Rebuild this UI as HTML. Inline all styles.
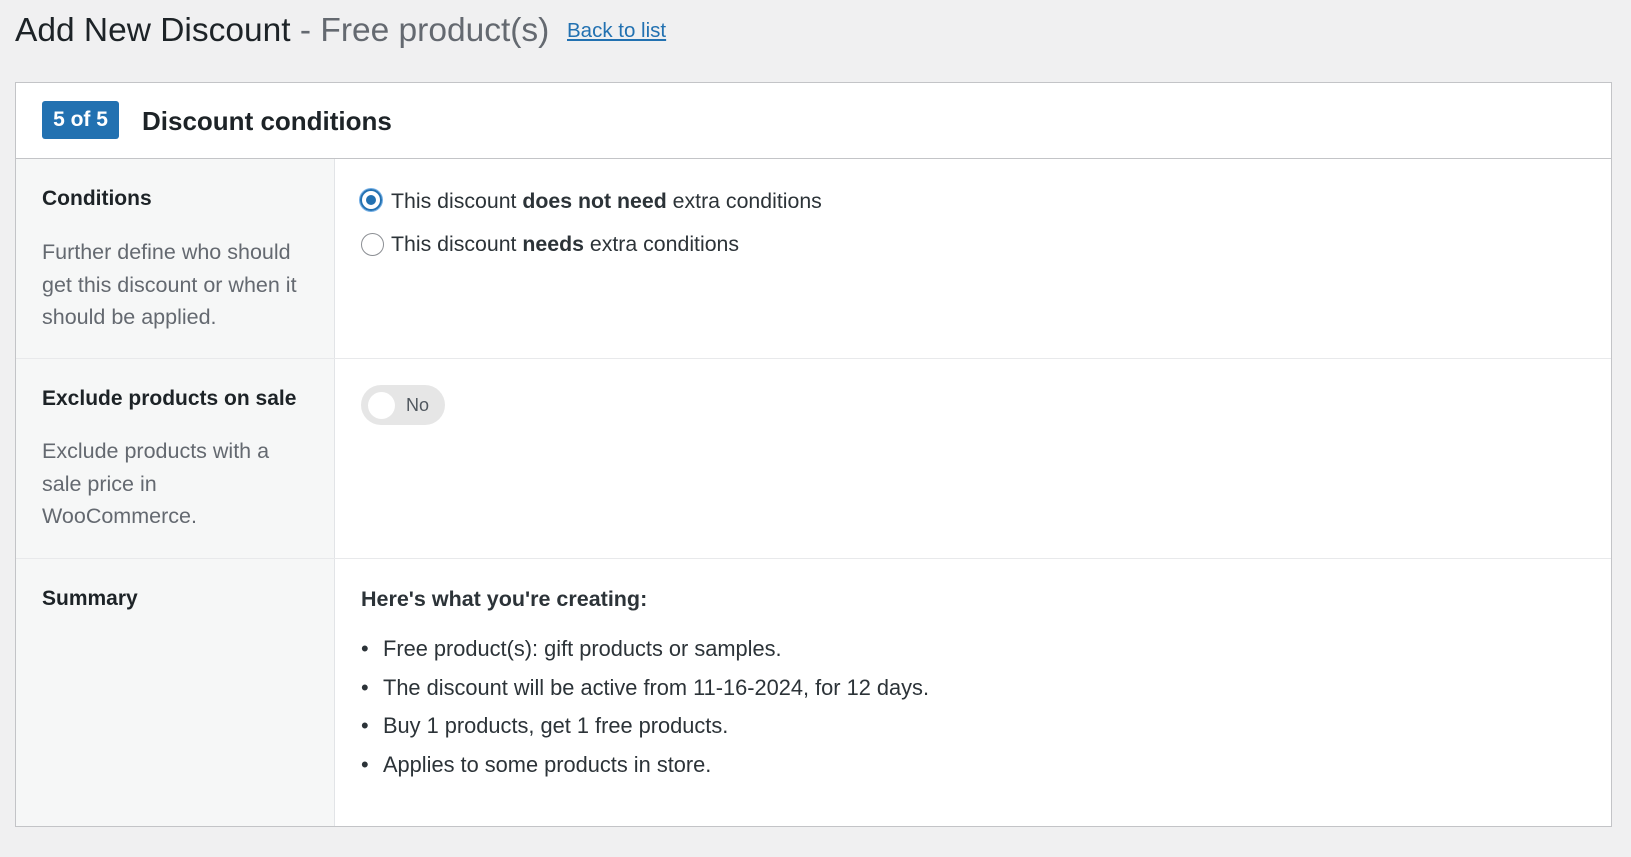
<!DOCTYPE html>
<html><head><meta charset="utf-8"><style>
body{margin:0;width:1631px;height:857px;background:#f0f0f1;font-family:"Liberation Sans",sans-serif;color:#3c434a;position:relative;overflow:hidden}
.a{position:absolute;white-space:nowrap}
.panel{position:absolute;left:15px;top:82px;width:1597px;height:745px;background:#fff;border:1px solid #c3c4c7;box-sizing:border-box}
.lc{position:absolute;left:16px;width:318px;background:#f6f7f7;border-right:1px solid #e2e4e7}
.hr{position:absolute;left:16px;width:1595px;height:1px;background:#e8e9eb}
.lbl{font-size:21px;font-weight:bold;color:#1d2327;line-height:30px}
.desc{font-size:21.5px;color:#646970;line-height:32.5px}
.t{font-size:21.3px;line-height:30px;color:#2c3338}
</style></head><body>
<div class="a" style="left:15px;top:11px;font-size:33.5px;line-height:40px;color:#1d2327">Add New Discount <span style="color:#646970">- Free product(s)</span></div>
<div class="a" style="left:567px;top:18px;font-size:20.5px;line-height:26px;color:#2271b1;text-decoration:underline">Back to list</div>
<div class="panel"></div>
<div class="a" style="left:16px;top:158px;width:1595px;height:1px;background:#c3c4c7"></div>
<div class="lc" style="top:159px;height:667px"></div>
<div class="hr" style="top:358px"></div>
<div class="hr" style="top:558px"></div>
<div class="a" style="left:42px;top:101px;width:77px;height:38px;background:#2271b1;border-radius:3px;color:#fff;font-size:21px;font-weight:bold;line-height:38px;text-align:center">5 of 5</div>
<div class="a" style="left:142px;top:105px;font-size:26px;font-weight:bold;line-height:32px;color:#1d2327">Discount conditions</div>

<div class="a lbl" style="left:42px;top:184px">Conditions</div>
<div class="a desc" style="left:42px;top:236px">Further define who should<br>get this discount or when it<br>should be applied.</div>

<div class="a" style="left:360px;top:189px;width:22px;height:22px;border:2px solid #2271b1;border-radius:50%;box-sizing:border-box;box-shadow:0 0 0 1px #72aee6"></div>
<div class="a" style="left:366px;top:195px;width:10px;height:10px;background:#2271b1;border-radius:50%"></div>
<div class="a t" style="left:391px;top:186px">This discount <b>does not need</b> extra conditions</div>
<div class="a" style="left:361px;top:233px;width:23px;height:23px;border:1px solid #8c8f94;border-radius:50%;box-sizing:border-box;background:#fff"></div>
<div class="a t" style="left:391px;top:229px">This discount <b>needs</b> extra conditions</div>

<div class="a lbl" style="left:42px;top:384px">Exclude products on sale</div>
<div class="a desc" style="left:42px;top:435px">Exclude products with a<br>sale price in<br>WooCommerce.</div>
<div class="a" style="left:361px;top:385px;width:84px;height:40px;background:#e6e6e6;border-radius:20px"></div>
<div class="a" style="left:368px;top:392px;width:27px;height:27px;background:#fff;border-radius:50%"></div>
<div class="a" style="left:406px;top:393px;font-size:18px;line-height:24px;color:#50575e">No</div>

<div class="a lbl" style="left:361px;top:584px;font-size:21.5px;color:#2c3338">Here's what you're creating:</div>
<div class="a lbl" style="left:42px;top:584px">Summary</div>
<div class="a t" style="left:361px;top:630px;line-height:38.5px;font-size:21.8px">
<div><span style="display:inline-block;width:22px">&bull;</span>Free product(s): gift products or samples.</div>
<div><span style="display:inline-block;width:22px">&bull;</span>The discount will be active from 11-16-2024, for 12 days.</div>
<div><span style="display:inline-block;width:22px">&bull;</span>Buy 1 products, get 1 free products.</div>
<div><span style="display:inline-block;width:22px">&bull;</span>Applies to some products in store.</div>
</div>
</body></html>
